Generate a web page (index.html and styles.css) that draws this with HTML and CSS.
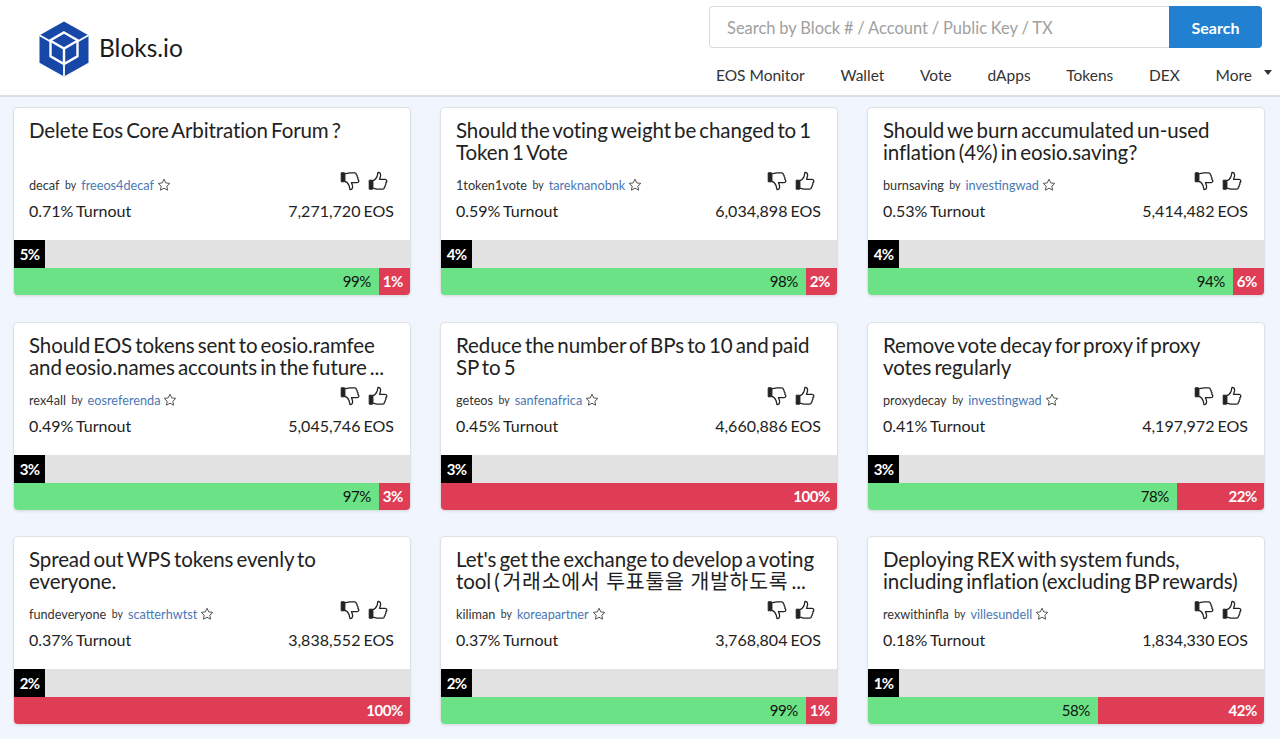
FILE: index.html
```html
<!DOCTYPE html>
<html lang="en">
<head>
<meta charset="utf-8">
<title>Bloks.io</title>
<link rel="stylesheet" href="styles.css">
</head>
<body>
<svg class="defs" width="0" height="0" aria-hidden="true">
  <defs>
    <symbol id="thumb" viewBox="0 0 20 20">
      <path d="M1.200 9.200h3.400v9h-3.400z" fill="#222" stroke="#222" stroke-width="1"/>
      <path d="M4.800 9.600c2 -.4 3.400 -2 4.200 -4 .5 -1.300 .5 -3 1 -4.100 1.400 -.3 2.700 .9 2.600 2.800 0 1.400 -.7 2.700 -1.100 4h5.300c1.300 0 2.100 1 2 2 -.1 .7 -.5 1.200 -1 1.500 .4 .9 .2 1.900 -.6 2.400 .2 1 -.1 1.800 -.9 2.200 .1 1 -.5 1.800 -1.700 1.800h-4.700c-2 0 -3.400 -.9 -5.100 -1z" fill="#fff" stroke="#222" stroke-width="1.300" stroke-linejoin="round"/>
    </symbol>
    <symbol id="star" viewBox="0 0 14 14">
      <path d="M7 1.200l1.750 3.700 4.050 .5 -3 2.800 .8 4 -3.600 -2 -3.600 2 .8 -4 -3 -2.800 4.050 -.5z" fill="none" stroke="#555" stroke-width="1" stroke-linejoin="round"/>
    </symbol>
  </defs>
</svg>

<header class="topbar">
  <a class="brand">
    <svg class="logo" viewBox="0 0 50 56" aria-hidden="true">
      <path d="M25 0.500L49.500 14.200V41.800L25 55.500L0.500 41.800V14.200z" fill="#1748a8"/>
      <path d="M0.500 14.200L11.500 20.500M49.500 14.200L38.500 20.500M25 55.500V43" stroke="#fff" stroke-width="1.800" fill="none"/>
      <path d="M25 11.500L38.500 19.200V35.300L25 43L11.500 35.300V19.200z" fill="none" stroke="#fff" stroke-width="2.400" stroke-linejoin="miter"/>
      <path d="M11.500 19.800L25 27.500L38.500 19.800M25 27.500V43" fill="none" stroke="#fff" stroke-width="2.400"/>
    </svg>
    <span class="brand-name">Bloks.io</span>
  </a>
  <div class="top-right">
    <form class="search">
      <input class="search-input" type="text" placeholder="Search by Block # / Account / Public Key / TX">
      <button class="search-btn" type="button">Search</button>
    </form>
    <nav class="nav">
      <a>EOS Monitor</a><a>Wallet</a><a>Vote</a><a>dApps</a><a>Tokens</a><a>DEX</a><a class="more">More</a>
    </nav>
  </div>
</header>

<main class="grid">

  <article class="card">
    <div class="body">
      <h2 class="title">Delete Eos Core Arbitration Forum ?</h2>
      <div class="meta"><span class="account">decaf</span><span class="by">by</span><a class="author">freeos4decaf</a><svg class="star"><use href="#star"/></svg>
        <span class="thumbs"><svg class="thumb down"><use href="#thumb"/></svg><svg class="thumb"><use href="#thumb"/></svg></span></div>
      <div class="stats"><span>0.71% Turnout</span><span>7,271,720 EOS</span></div>
    </div>
    <div class="turnout"><span class="pct">5%</span></div>
    <div class="votes"><span class="yes" style="width:365px">99%</span><span class="no">1%</span></div>
  </article>

  <article class="card">
    <div class="body">
      <h2 class="title">Should the voting weight be changed to 1 Token 1 Vote</h2>
      <div class="meta"><span class="account">1token1vote</span><span class="by">by</span><a class="author">tareknanobnk</a><svg class="star"><use href="#star"/></svg>
        <span class="thumbs"><svg class="thumb down"><use href="#thumb"/></svg><svg class="thumb"><use href="#thumb"/></svg></span></div>
      <div class="stats"><span>0.59% Turnout</span><span>6,034,898 EOS</span></div>
    </div>
    <div class="turnout"><span class="pct">4%</span></div>
    <div class="votes"><span class="yes" style="width:365px">98%</span><span class="no">2%</span></div>
  </article>

  <article class="card">
    <div class="body">
      <h2 class="title">Should we burn accumulated un-used inflation (4%) in eosio.saving?</h2>
      <div class="meta"><span class="account">burnsaving</span><span class="by">by</span><a class="author">investingwad</a><svg class="star"><use href="#star"/></svg>
        <span class="thumbs"><svg class="thumb down"><use href="#thumb"/></svg><svg class="thumb"><use href="#thumb"/></svg></span></div>
      <div class="stats"><span>0.53% Turnout</span><span>5,414,482 EOS</span></div>
    </div>
    <div class="turnout"><span class="pct">4%</span></div>
    <div class="votes"><span class="yes" style="width:365px">94%</span><span class="no">6%</span></div>
  </article>

  <article class="card">
    <div class="body">
      <h2 class="title">Should EOS tokens sent to eosio.ramfee and eosio.names accounts in the future ...</h2>
      <div class="meta"><span class="account">rex4all</span><span class="by">by</span><a class="author">eosreferenda</a><svg class="star"><use href="#star"/></svg>
        <span class="thumbs"><svg class="thumb down"><use href="#thumb"/></svg><svg class="thumb"><use href="#thumb"/></svg></span></div>
      <div class="stats"><span>0.49% Turnout</span><span>5,045,746 EOS</span></div>
    </div>
    <div class="turnout"><span class="pct">3%</span></div>
    <div class="votes"><span class="yes" style="width:365px">97%</span><span class="no">3%</span></div>
  </article>

  <article class="card">
    <div class="body">
      <h2 class="title">Reduce the number of BPs to 10 and paid SP to 5</h2>
      <div class="meta"><span class="account">geteos</span><span class="by">by</span><a class="author">sanfenafrica</a><svg class="star"><use href="#star"/></svg>
        <span class="thumbs"><svg class="thumb down"><use href="#thumb"/></svg><svg class="thumb"><use href="#thumb"/></svg></span></div>
      <div class="stats"><span>0.45% Turnout</span><span>4,660,886 EOS</span></div>
    </div>
    <div class="turnout"><span class="pct">3%</span></div>
    <div class="votes"><span class="no">100%</span></div>
  </article>

  <article class="card">
    <div class="body">
      <h2 class="title">Remove vote decay for proxy if proxy votes regularly</h2>
      <div class="meta"><span class="account">proxydecay</span><span class="by">by</span><a class="author">investingwad</a><svg class="star"><use href="#star"/></svg>
        <span class="thumbs"><svg class="thumb down"><use href="#thumb"/></svg><svg class="thumb"><use href="#thumb"/></svg></span></div>
      <div class="stats"><span>0.41% Turnout</span><span>4,197,972 EOS</span></div>
    </div>
    <div class="turnout"><span class="pct">3%</span></div>
    <div class="votes"><span class="yes" style="width:309px">78%</span><span class="no">22%</span></div>
  </article>

  <article class="card">
    <div class="body">
      <h2 class="title">Spread out WPS tokens evenly to everyone.</h2>
      <div class="meta"><span class="account">fundeveryone</span><span class="by">by</span><a class="author">scatterhwtst</a><svg class="star"><use href="#star"/></svg>
        <span class="thumbs"><svg class="thumb down"><use href="#thumb"/></svg><svg class="thumb"><use href="#thumb"/></svg></span></div>
      <div class="stats"><span>0.37% Turnout</span><span>3,838,552 EOS</span></div>
    </div>
    <div class="turnout"><span class="pct">2%</span></div>
    <div class="votes"><span class="no">100%</span></div>
  </article>

  <article class="card">
    <div class="body">
      <h2 class="title">Let's get the exchange to develop a voting tool (<span class="ko">거래소에서 투표툴을 개발하도록</span> ...</h2>
      <div class="meta"><span class="account">kiliman</span><span class="by">by</span><a class="author">koreapartner</a><svg class="star"><use href="#star"/></svg>
        <span class="thumbs"><svg class="thumb down"><use href="#thumb"/></svg><svg class="thumb"><use href="#thumb"/></svg></span></div>
      <div class="stats"><span>0.37% Turnout</span><span>3,768,804 EOS</span></div>
    </div>
    <div class="turnout"><span class="pct">2%</span></div>
    <div class="votes"><span class="yes" style="width:365px">99%</span><span class="no">1%</span></div>
  </article>

  <article class="card">
    <div class="body">
      <h2 class="title">Deploying REX with system funds, including inflation (excluding BP rewards)</h2>
      <div class="meta"><span class="account">rexwithinfla</span><span class="by">by</span><a class="author">villesundell</a><svg class="star"><use href="#star"/></svg>
        <span class="thumbs"><svg class="thumb down"><use href="#thumb"/></svg><svg class="thumb"><use href="#thumb"/></svg></span></div>
      <div class="stats"><span>0.18% Turnout</span><span>1,834,330 EOS</span></div>
    </div>
    <div class="turnout"><span class="pct">1%</span></div>
    <div class="votes"><span class="yes" style="width:230px">58%</span><span class="no">42%</span></div>
  </article>

</main>
</body>
</html>
```

FILE: styles.css
```css
* { box-sizing: border-box; }
html, body { margin: 0; padding: 0; }
body {
  height: 739px;
  overflow: hidden;
  background: #f1f5fd;
  font-family: Lato, "Noto Sans CJK KR", sans-serif;
  color: #222;
}
.defs { position: absolute; }

.topbar {
  display: flex;
  justify-content: space-between;
  height: 97px;
  padding: 6px 0 0 39px;
  background: #fff;
  border-bottom: 2px solid #dcdfe3;
}
.brand { display: flex; align-items: center; gap: 10px; height: 85px; }
.logo { width: 50px; height: 56px; display: block; margin-top: 1px; }
.brand-name { font-size: 24.500px; color: #1a1a1a; margin-top: -3px; }

.top-right { width: 571px; }
.search { display: flex; width: 553px; height: 42px; }
.search-input {
  flex: 1;
  min-width: 0;
  padding: 2px 17px 0;
  border: 1px solid #dbdbdb;
  border-right: 0;
  border-radius: 4px 0 0 4px;
  font: 16.500px Lato, sans-serif;
  word-spacing: -.45px;
  background: #fff;
}
.search-input::placeholder { color: #a0a0a0; opacity: 1; }
.search-btn {
  width: 93px;
  border: 0;
  border-radius: 0 4px 4px 0;
  background: #2180d0;
  color: #fff;
  font: 700 16px Lato, sans-serif;
}
.nav {
  display: flex;
  gap: 35.700px;
  margin-top: 17px;
  padding-left: 7px;
  font-size: 15.500px;
  line-height: 20px;
  color: #333;
}
.more { position: relative; }
.more::after {
  content: "";
  position: absolute;
  left: 48px;
  top: 5px;
  border: 4.500px solid transparent;
  border-top: 5px solid #333;
  border-bottom: 0;
}

.grid {
  display: grid;
  grid-template-columns: repeat(3, 396px);
  column-gap: 31px;
  row-gap: 27.500px;
  padding: 11px 0 0 14px;
}
.card {
  height: 187px;
  background: #fff;
  border-radius: 4px;
  box-shadow: 0 0 0 1px #dfe1e5, 0 1px 3px rgba(0,0,0,.15);
  overflow: hidden;
}
.body { height: 132px; padding: 11.250px 16px 0 15px; }
.title {
  margin: 0;
  height: 43.750px;
  font-size: 20.500px;
  font-weight: 400;
  line-height: 22px;
  letter-spacing: -.1px;
  word-spacing: -2px;
  color: #222;
}
.ko {
  margin-left: 3px;
  letter-spacing: .7px;
  word-spacing: 0;
}
.meta {
  display: flex;
  align-items: center;
  height: 30px;
  margin-top: 7px;
  font-size: 12.700px;
  color: #333;
}
.by { margin: 0 5px 0 5.500px; font-size: 10.500px; }
.author { color: #4a78b5; }
.star { width: 14px; height: 14px; margin-left: 3px; }
.thumbs { display: flex; gap: 8px; margin-left: auto; margin-top: -8px; margin-right: 6px; }
.thumb { width: 20px; height: 20px; }
.down { transform: rotate(180deg) scaleX(-1); }
.stats {
  display: flex;
  justify-content: space-between;
  font-size: 16px;
  line-height: 22px;
  word-spacing: -1px;
  color: #222;
}
.turnout { height: 28px; background: #e2e2e2; }
.pct {
  display: block;
  width: 31px;
  height: 28px;
  background: #000;
  color: #fff;
  font-size: 15px;
  font-weight: 700;
  line-height: 28px;
  letter-spacing: -.7px;
  text-align: center;
}
.votes { display: flex; height: 27px; font-size: 15px; line-height: 27px; letter-spacing: -.4px; }
.yes { background: #6ae285; color: #111; text-align: right; padding-right: 8px; }
.no {
  flex: 1;
  background: #de3d55;
  color: #fff;
  font-weight: 700;
  text-align: right;
  padding-right: 7px;
}
```
